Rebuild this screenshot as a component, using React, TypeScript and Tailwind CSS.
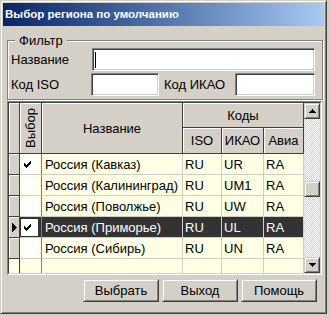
const RAISED =
  'border border-t-[#d4d0c8] border-l-[#d4d0c8] border-r-[#404040] border-b-[#404040] shadow-[inset_1px_1px_0_#fff,inset_-1px_-1px_0_#808080] bg-[#d4d0c8]'
const SUNKEN =
  'border border-t-[#808080] border-l-[#808080] border-r-white border-b-white shadow-[inset_1px_1px_0_#404040,inset_-1px_-1px_0_#d4d0c8] bg-white'
const HEAD = 'bg-[#d4d0c8] border-r border-b border-[#404040] shadow-[inset_1px_1px_0_#fff]'
const CELL = 'border-r border-b border-[#cfcfc4] flex items-center whitespace-nowrap'

const ROWS = [
  { name: 'Россия (Кавказ)', iso: 'RU', icao: 'UR', avia: 'RA', checked: true },
  { name: 'Россия (Калининград)', iso: 'RU', icao: 'UM1', avia: 'RA', checked: false },
  { name: 'Россия (Поволжье)', iso: 'RU', icao: 'UW', avia: 'RA', checked: false },
  { name: 'Россия (Приморье)', iso: 'RU', icao: 'UL', avia: 'RA', checked: true, selected: true },
  { name: 'Россия (Сибирь)', iso: 'RU', icao: 'UN', avia: 'RA', checked: false },
]

function Check() {
  return (
    <svg width="7" height="7" viewBox="0 0 7 7" shapeRendering="crispEdges" fill="#000">
      <path d="M6 0h1v1h-1z M5 1h2v1h-2z M0 2h1v1h-1z M4 2h3v1h-3z M0 3h2v1h-2z M3 3h3v1h-3z M0 4h5v1h-5z M1 5h3v1h-3z M2 6h1v1h-1z" />
    </svg>
  )
}

function Arrow({ down }: { down?: boolean }) {
  return (
    <svg width="7" height="4" viewBox="0 0 7 4" shapeRendering="crispEdges" fill="#000" className={down ? 'rotate-180' : ''}>
      <path d="M3 0h1v1h-1z M2 1h3v1h-3z M1 2h5v1h-5z M0 3h7v1h-7z" />
    </svg>
  )
}

function Field({ w, caret }: { w: string; caret?: boolean }) {
  return (
    <div className={`${SUNKEN} ${w} h-[23px] flex items-center`}>
      {caret && <div className="ml-[2px] w-px h-[16px] bg-black" />}
    </div>
  )
}

function Button({ label }: { label: string }) {
  return <div className={`${RAISED} w-[76px] h-[23px] flex items-center justify-center`}>{label}</div>
}

export default function App() {
  return (
    <div className="w-[331px] h-[317px] bg-[#d4d0c8] font-['Liberation_Sans',Arial,sans-serif] text-[13px] text-black leading-none">
      <div className="w-[327px] h-[314px] border border-t-[#d4d0c8] border-l-[#d4d0c8] border-r-[#404040] border-b-[#404040] shadow-[inset_1px_1px_0_#fff,inset_-1px_-1px_0_#808080] p-[2px] flex flex-col">
        <div className="h-[23px] bg-linear-to-r from-[#0a246a] to-[#a6caf0] flex items-center pl-[2px] text-white font-bold text-[11.5px]">
          Выбор региона по умолчанию
        </div>

        <fieldset className="ml-[4px] mr-[1px] mt-[7px] border border-[#808080] shadow-[inset_1px_1px_0_#fff,1px_1px_0_#fff] pl-[3px] pr-[4px] pb-[3px] min-w-0">
          <legend className="ml-[4px] px-[4px] leading-[15px] bg-[#d4d0c8]">Фильтр</legend>
          <div className="flex items-center">
            <span className="w-[81px]">Название</span>
            <Field w="w-[223px]" caret />
          </div>
          <div className="flex items-center mt-[2px]">
            <span className="w-[80px]">Код ISO</span>
            <Field w="w-[68px]" />
            <span className="ml-[5px] w-[71px]">Код ИКАО</span>
            <Field w="w-[80px]" />
          </div>
        </fieldset>

        <div className="mt-[1px] ml-[4px] w-[315px] h-[174px] border border-t-[#808080] border-l-[#808080] border-r-white border-b-white">
          <div className="h-full border border-t-[#404040] border-l-[#404040] border-r-[#d4d0c8] border-b-[#d4d0c8] flex bg-[#ffffe6]">
            <div className="w-[295px] flex flex-col overflow-hidden">
              <div className="h-[51px] flex shrink-0">
                <div className={`${HEAD} w-[11px]`} />
                <div className={`${HEAD} w-[22px] flex items-center justify-center`}>
                  <span className="[writing-mode:vertical-rl] rotate-180">Выбор</span>
                </div>
                <div className={`${HEAD} w-[141px] flex items-center justify-center`}>Название</div>
                <div className="w-[121px] flex flex-col">
                  <div className={`${HEAD} h-[25px] flex items-center justify-center`}>Коды</div>
                  <div className="h-[26px] flex">
                    <div className={`${HEAD} w-[39px] flex items-center justify-center`}>ISO</div>
                    <div className={`${HEAD} w-[42px] flex items-center justify-center`}>ИКАО</div>
                    <div className={`${HEAD} w-[40px] flex items-center justify-center`}>Авиа</div>
                  </div>
                </div>
              </div>

              {ROWS.map((r) => {
                const bg = r.selected ? 'bg-[#333333] text-white' : 'bg-[#ffffe6]'
                return (
                  <div key={r.name} className="h-[21px] flex shrink-0">
                    <div className={`${HEAD} w-[11px] flex items-center justify-center`}>
                      {r.selected && (
                        <svg width="5" height="9" viewBox="0 0 5 9" shapeRendering="crispEdges" fill="#000">
                          <path d="M0 0L5 4.5L0 9Z" />
                        </svg>
                      )}
                    </div>
                    <div className={`${bg} w-[22px] border-r border-b border-r-[#808080] border-b-[#cfcfc4] flex items-center pl-[1px]`}>
                      <div className="w-[17px] h-[17px] bg-white flex items-center pl-[3px] pt-[1px]">
                        {r.checked && <Check />}
                      </div>
                    </div>
                    <div className={`${CELL} ${bg} w-[141px] pl-[3px]`}>{r.name}</div>
                    <div className={`${CELL} ${bg} w-[39px] pl-[2px]`}>{r.iso}</div>
                    <div className={`${CELL} ${bg} w-[42px] pl-[2px]`}>{r.icao}</div>
                    <div className={`${CELL} ${bg} w-[40px] pl-[2px]`}>{r.avia}</div>
                  </div>
                )
              })}

              <div className="flex-1 flex">
                <div className="w-[11px] border-r border-[#404040]" />
                <div className="w-[22px] border-r border-[#808080]" />
                <div className="w-[141px] border-r border-[#cfcfc4]" />
                <div className="w-[39px] border-r border-[#cfcfc4]" />
                <div className="w-[42px] border-r border-[#cfcfc4]" />
                <div className="w-[40px] border-r border-[#cfcfc4]" />
              </div>
            </div>

            <div className="w-[16px] flex flex-col bg-[repeating-conic-gradient(#ffffff_0%_25%,#d4d0c8_0%_50%)] [background-size:2px_2px]">
              <div className={`${RAISED} h-[16px] flex items-center justify-center`}>
                <Arrow />
              </div>
              <div className="h-[62px]" />
              <div className={`${RAISED} h-[16px]`} />
              <div className="flex-1" />
              <div className={`${RAISED} h-[16px] flex items-center justify-center`}>
                <Arrow down />
              </div>
            </div>
          </div>
        </div>

        <div className="mt-[4px] flex justify-end gap-[3px] pr-[7px]">
          <Button label="Выбрать" />
          <Button label="Выход" />
          <Button label="Помощь" />
        </div>
      </div>
    </div>
  )
}
